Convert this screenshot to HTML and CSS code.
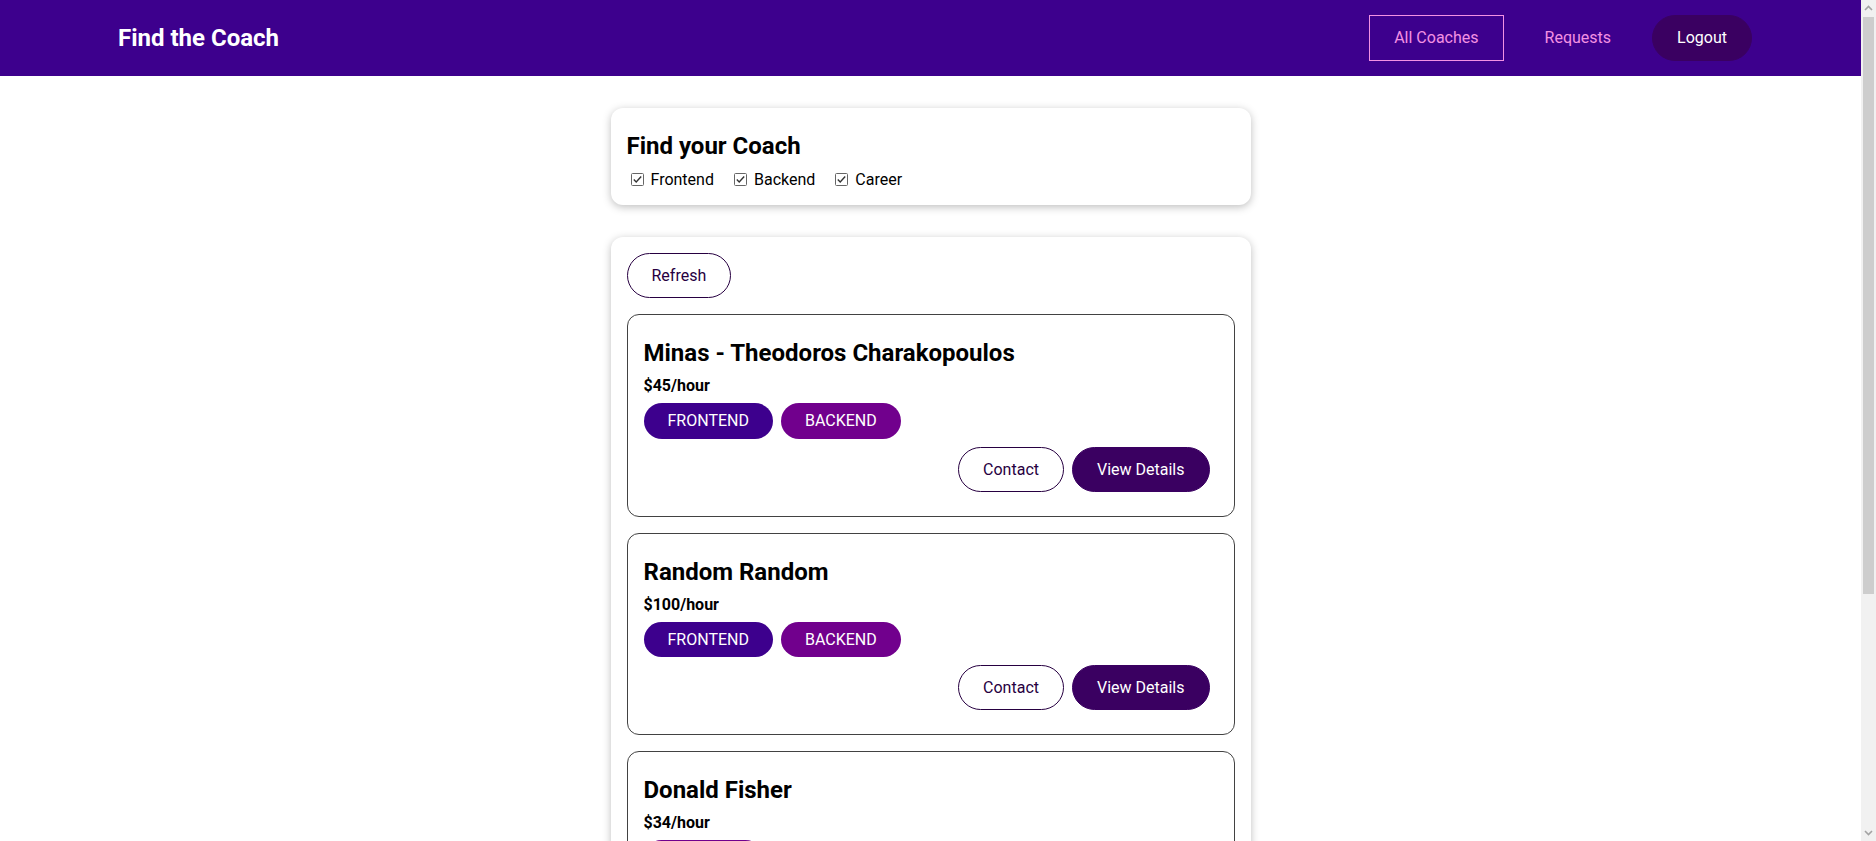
FILE: index.html
```html
<!DOCTYPE html>
<html lang="en">
<head>
<meta charset="utf-8">
<title>Find the Coach</title>
<link rel="stylesheet" href="styles.css">
</head>
<body>
<header class="site-header">
  <nav class="nav">
    <h1 class="brand"><a class="nav-link brand-link" href="#">Find the Coach</a></h1>
    <ul class="nav-list">
      <li class="nav-item"><a class="nav-link active" href="#">All Coaches</a></li>
      <li class="nav-item"><a class="nav-link" href="#">Requests</a></li>
      <li class="nav-item"><button class="btn">Logout</button></li>
    </ul>
  </nav>
</header>
<main>
  <section>
    <div class="card">
      <h2 class="filter-title">Find your Coach</h2>
      <div class="filter-row"><span class="filter-option"><span class="check"><svg width="13" height="13" viewBox="0 0 13 13"><rect x="0.5" y="0.5" width="12" height="12" rx="1" fill="#fff" stroke="#666"/><path d="M2.8 6.6 L5.2 9 L10.2 3.6" fill="none" stroke="#333" stroke-width="1.4"/></svg></span><label class="filter-label">Frontend</label></span><span class="filter-option"><span class="check"><svg width="13" height="13" viewBox="0 0 13 13"><rect x="0.5" y="0.5" width="12" height="12" rx="1" fill="#fff" stroke="#666"/><path d="M2.8 6.6 L5.2 9 L10.2 3.6" fill="none" stroke="#333" stroke-width="1.4"/></svg></span><label class="filter-label">Backend</label></span><span class="filter-option"><span class="check"><svg width="13" height="13" viewBox="0 0 13 13"><rect x="0.5" y="0.5" width="12" height="12" rx="1" fill="#fff" stroke="#666"/><path d="M2.8 6.6 L5.2 9 L10.2 3.6" fill="none" stroke="#333" stroke-width="1.4"/></svg></span><label class="filter-label">Career</label></span></div>
    </div>
  </section>
  <section>
    <div class="card">
      <div class="controls">
        <button class="btn outline">Refresh</button>
      </div>
      <ul class="coach-list">
        <li class="coach">
          <h3 class="coach-name">Minas - Theodoros Charakopoulos</h3>
          <h4 class="coach-rate">$45/hour</h4>
          <div class="badges"><span class="badge frontend">FRONTEND</span><span class="badge backend">BACKEND</span></div>
          <div class="actions"><a class="btn outline" href="#">Contact</a><a class="btn" href="#">View Details</a></div>
        </li>
        <li class="coach">
          <h3 class="coach-name">Random Random</h3>
          <h4 class="coach-rate">$100/hour</h4>
          <div class="badges"><span class="badge frontend">FRONTEND</span><span class="badge backend">BACKEND</span></div>
          <div class="actions"><a class="btn outline" href="#">Contact</a><a class="btn" href="#">View Details</a></div>
        </li>
        <li class="coach">
          <h3 class="coach-name">Donald Fisher</h3>
          <h4 class="coach-rate">$34/hour</h4>
          <div class="badges"><span class="badge backend">BACKEND</span></div>
          <div class="actions"><a class="btn outline" href="#">Contact</a><a class="btn" href="#">View Details</a></div>
        </li>
        <li class="coach">
          <h3 class="coach-name">Julie Jones</h3>
          <h4 class="coach-rate">$30/hour</h4>
          <div class="badges"><span class="badge frontend">FRONTEND</span><span class="badge career">CAREER</span></div>
          <div class="actions"><a class="btn outline" href="#">Contact</a><a class="btn" href="#">View Details</a></div>
        </li>
      </ul>
    </div>
  </section>
</main>
<div class="scrollbar" aria-hidden="true">
  <div class="scroll-arrow"><svg width="15" height="17" viewBox="0 0 15 17"><path d="M4 10 L7.5 6.5 L11 10" fill="none" stroke="#a3a3a3" stroke-width="1.6"/></svg></div>
  <div class="scroll-track"><div class="scroll-thumb"></div></div>
  <div class="scroll-arrow"><svg width="15" height="17" viewBox="0 0 15 17"><path d="M4 7 L7.5 10.5 L11 7" fill="none" stroke="#a3a3a3" stroke-width="1.6"/></svg></div>
</div>
</body>
</html>
```
FILE: styles.css
```css
* {
  box-sizing: border-box;
}

html {
  font-family: Roboto, "Liberation Sans", sans-serif;
  line-height: 1.2;
}

body {
  margin: 0;
  padding-right: 15px;
}

.site-header {
  width: 100%;
  height: 76px;
  background-color: #3d008d;
  display: flex;
  justify-content: center;
  align-items: center;
}

.nav {
  width: 90%;
  margin: auto;
  display: flex;
  justify-content: space-between;
  align-items: center;
}

.brand {
  margin: 0;
  font-size: 24px;
}

.nav-link {
  text-decoration: none;
  color: #f391e3;
  display: inline-block;
  padding: 0.75rem 1.5rem;
  border: 1px solid transparent;
}

.nav-link.active {
  border: 1px solid #f391e3;
}

.brand-link {
  color: #ffffff;
  margin: 0;
}

.nav-list {
  list-style: none;
  margin: 0;
  padding: 0;
  display: flex;
  justify-content: center;
  align-items: center;
}

.nav-item {
  margin: 0 0.5rem;
}

.btn {
  text-decoration: none;
  padding: 0.75rem 1.5rem;
  font: inherit;
  background-color: #3a0061;
  border: 1px solid #3a0061;
  color: #ffffff;
  cursor: pointer;
  border-radius: 30px;
  margin-right: 0.5rem;
  display: inline-block;
}

.btn.outline {
  background-color: transparent;
  border-color: #270041;
  color: #270041;
}

.card {
  border-radius: 12px;
  box-shadow: 0 2px 8px rgba(0, 0, 0, 0.26);
  padding: 1rem;
  margin: 2rem auto;
  max-width: 40rem;
}

.filter-title {
  margin: 0.5rem 0;
  font-size: 24px;
}

.filter-option {
  margin-right: 1rem;
}

.check {
  display: inline-block;
  width: 13px;
  height: 13px;
  margin: 3px 3px 3px 4px;
  vertical-align: middle;
}

.check svg {
  display: block;
}

.filter-label {
  vertical-align: middle;
  margin-left: 0.25rem;
}

.controls {
  display: flex;
  justify-content: space-between;
}

.coach-list {
  list-style: none;
  margin: 0;
  padding: 0;
}

.coach {
  margin: 1rem 0;
  border: 1px solid #424242;
  border-radius: 12px;
  padding: 1rem;
}

.coach-name {
  font-size: 1.5rem;
  margin: 0.5rem 0;
}

.coach-rate {
  font-size: 1rem;
  margin: 0.5rem 0;
}

.badges {
  margin: 0.5rem 0;
}

.badge {
  background-color: #cccccc;
  color: #252525;
  border-radius: 30px;
  padding: 0.5rem 1.5rem;
  display: inline-block;
  margin-right: 0.5rem;
}

.badge.frontend {
  background-color: #3d008d;
  color: #ffffff;
}

.badge.backend {
  background-color: #71008d;
  color: #ffffff;
}

.badge.career {
  background-color: #8d006e;
  color: #ffffff;
}

.actions {
  margin: 0.5rem 0;
  display: flex;
  justify-content: flex-end;
}

.scrollbar {
  position: fixed;
  top: 0;
  right: 0;
  width: 15px;
  height: 100vh;
  background-color: #f1f1f1;
  display: flex;
  flex-direction: column;
}

.scroll-arrow {
  height: 17px;
  flex: none;
}

.scroll-arrow svg {
  display: block;
}

.scroll-track {
  flex: 1;
  padding: 0 2px;
}

.scroll-thumb {
  height: 577px;
  background-color: #cdcdcd;
}
```
